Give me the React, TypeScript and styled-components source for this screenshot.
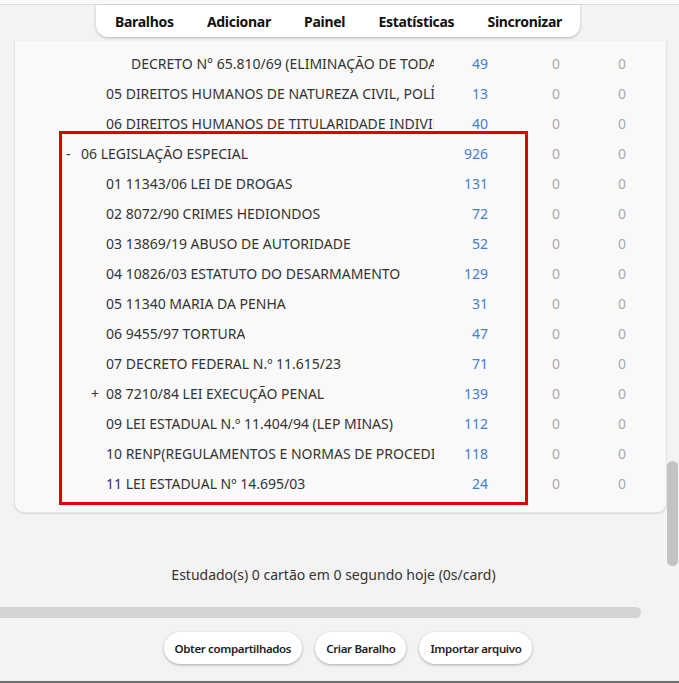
import React from 'react';
import styled, {createGlobalStyle} from 'styled-components';

type Deck = {
  name: string;
  count: number;
  depth: number;
  toggle?: '-' | '+';
};

const before: Deck[] = [
  {name: 'DECRETO N° 65.810/69 (ELIMINAÇÃO DE TODAS AS FORMAS DE DISCRIMINAÇÃO RACIAL)', count: 49, depth: 3},
  {name: '05 DIREITOS HUMANOS DE NATUREZA CIVIL, POLÍTICA E SOCIAL', count: 13, depth: 2},
  {name: '06 DIREITOS HUMANOS DE TITULARIDADE INDIVIDUAL', count: 40, depth: 2},
];

const marked: Deck[] = [
  {name: '06 LEGISLAÇÃO ESPECIAL', count: 926, depth: 1, toggle: '-'},
  {name: '01 11343/06 LEI DE DROGAS', count: 131, depth: 2},
  {name: '02 8072/90 CRIMES HEDIONDOS', count: 72, depth: 2},
  {name: '03 13869/19 ABUSO DE AUTORIDADE', count: 52, depth: 2},
  {name: '04 10826/03 ESTATUTO DO DESARMAMENTO', count: 129, depth: 2},
  {name: '05 11340 MARIA DA PENHA', count: 31, depth: 2},
  {name: '06 9455/97 TORTURA', count: 47, depth: 2},
  {name: '07 DECRETO FEDERAL N.º 11.615/23', count: 71, depth: 2},
  {name: '08 7210/84 LEI EXECUÇÃO PENAL', count: 139, depth: 2, toggle: '+'},
  {name: '09 LEI ESTADUAL N.º 11.404/94 (LEP MINAS)', count: 112, depth: 2},
  {name: '10 RENP(REGULAMENTOS E NORMAS DE PROCEDIMENTOS)', count: 118, depth: 2},
  {name: '11 LEI ESTADUAL Nº 14.695/03', count: 24, depth: 2},
];

const GlobalStyle = createGlobalStyle`
  body {
    margin: 0;
    background: #f3f3f3;
    font-family: "Noto Sans", "Open Sans", sans-serif;
    color: #333;
  }
`;

const DeckRow = ({deck}: {deck: Deck}) => (
  <Row>
    <Name $depth={deck.depth}>
      <Toggle>{deck.toggle ?? ''}</Toggle>
      <Title>{deck.name}</Title>
    </Name>
    <Count>{deck.count}</Count>
    <Zero>0</Zero>
    <Zero>0</Zero>
  </Row>
);

export default function App() {
  return (
    <Page>
      <GlobalStyle />
      <TopStrip />
      <Menu>
        <MenuItem>Baralhos</MenuItem>
        <MenuItem>Adicionar</MenuItem>
        <MenuItem>Painel</MenuItem>
        <MenuItem>Estatísticas</MenuItem>
        <MenuItem>Sincronizar</MenuItem>
      </Menu>
      <Card>
        {before.map((d) => (
          <DeckRow key={d.name} deck={d} />
        ))}
        <Marked>
          {marked.map((d) => (
            <DeckRow key={d.name} deck={d} />
          ))}
        </Marked>
      </Card>
      <Studied>Estudado(s) 0 cartão em 0 segundo hoje (0s/card)</Studied>
      <HScroll />
      <Actions>
        <ActionButton>Obter compartilhados</ActionButton>
        <ActionButton>Criar Baralho</ActionButton>
        <ActionButton>Importar arquivo</ActionButton>
      </Actions>
      <BottomLine />
      <VThumb />
    </Page>
  );
}

const Page = styled.div`
  position: relative;
  width: 679px;
  height: 683px;
  overflow: hidden;
  display: flex;
  flex-direction: column;
`;

const TopStrip = styled.div`
  height: 4px;
  background: #fafafa;
  border-bottom: 1px solid #dcdcdc;
`;

const Menu = styled.nav`
  align-self: flex-start;
  margin-left: 96px;
  width: 484px;
  height: 32px;
  display: flex;
  align-items: center;
  justify-content: space-between;
  padding: 0 18px 0 19px;
  box-sizing: border-box;
  background: #fff;
  border-radius: 0 0 12px 12px;
  box-shadow: 0 1px 3px rgba(0, 0, 0, 0.25);
  position: relative;
  z-index: 1;
`;

const MenuItem = styled.span`
  font-size: 14px;
  font-weight: 700;
  color: #111;
  letter-spacing: -0.3px;
`;

const Card = styled.section`
  margin: 4px 12px 0 14px;
  padding: 7px 0 14px;
  background: #f9f9f9;
  border: 1px solid #e4e4e4;
  border-top: none;
  border-radius: 0 0 10px 10px;
  box-shadow: 0 1px 1px rgba(0, 0, 0, 0.12);
`;

const Marked = styled.div`
  position: relative;
  &::after {
    content: '';
    position: absolute;
    top: -7px;
    bottom: -7px;
    left: 44px;
    width: 469px;
    box-sizing: border-box;
    border: 3px solid #e00000;
    pointer-events: none;
  }
`;

const Row = styled.div`
  display: grid;
  grid-template-columns: 419px 54px 72px 66px;
  height: 30px;
  align-items: center;
  font-size: 14px;
`;

const Name = styled.div<{$depth: number}>`
  display: flex;
  min-width: 0;
  overflow: hidden;
  padding-left: ${(p) => 51 + (p.$depth - 1) * 25}px;
`;

const Toggle = styled.span`
  flex: 0 0 15px;
  color: #333;
`;

const Title = styled.span`
  white-space: nowrap;
  overflow: hidden;
  text-overflow: clip;
  color: #333;
`;

const Count = styled.span`
  text-align: right;
  color: #3f7fd6;
`;

const Zero = styled.span`
  text-align: right;
  color: #aaa;
`;

const Studied = styled.div`
  margin-top: 52px;
  text-align: center;
  padding-right: 12px;
  font-size: 14px;
  line-height: 20px;
  color: #333;
`;

const HScroll = styled.div`
  margin-top: 22px;
  width: 641px;
  height: 11px;
  background: #d3d3d3;
  border-radius: 0 6px 6px 0;
`;

const Actions = styled.div`
  margin-top: 14px;
  display: flex;
  justify-content: center;
  gap: 13px;
  padding-left: 17px;
`;

const ActionButton = styled.button`
  height: 32px;
  padding: 0 11px;
  border: none;
  border-radius: 16px;
  background: #fff;
  box-shadow: 0 1px 3px rgba(0, 0, 0, 0.3);
  font-family: inherit;
  font-size: 11.5px;
  font-weight: 600;
  color: #222;
  letter-spacing: -0.35px;
`;

const BottomLine = styled.div`
  margin-top: auto;
  height: 2px;
  background: #6e6e6e;
`;

const VThumb = styled.div`
  position: absolute;
  right: 1px;
  top: 461px;
  width: 11px;
  height: 105px;
  border-radius: 6px;
  background: #c3c3c3;
`;
